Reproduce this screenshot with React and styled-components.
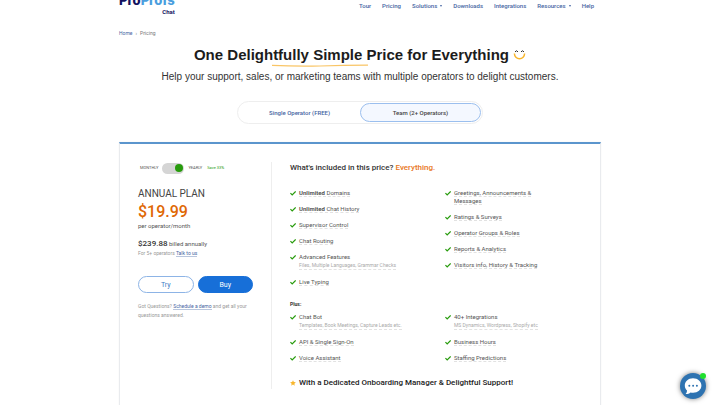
import React, { useState } from 'react';
import styled, { createGlobalStyle } from 'styled-components';

const GlobalStyle = createGlobalStyle`
  * {
    box-sizing: border-box;
  }

  body {
    margin: 0;
    background: #fff;
    color: #555;
    font-family: Roboto, sans-serif;
    font-size: 6px;
    line-height: 8px;
    overflow: hidden;
  }

  h1, h2, h3, p, ul {
    margin: 0;
    padding: 0;
  }

  button {
    font-family: inherit;
    cursor: pointer;
  }
`;

const Container = styled.div`
  max-width: 482px;
  margin: 0 auto;
`;

const Header = styled.header`
  display: flex;
  justify-content: space-between;
  align-items: flex-start;
  height: 24px;
  margin-top: -8px;
`;

const Logo = styled.a`
  display: block;
  color: #12125f;
  font-family: Inter, sans-serif;
  font-size: 13px;
  font-weight: 800;
  line-height: 16px;
  text-align: right;
  text-decoration: none;
`;

const LogoAccent = styled.span`
  color: #4a9ede;
`;

const LogoProduct = styled.span`
  display: block;
  font-family: Roboto, sans-serif;
  font-size: 6px;
  font-weight: 700;
  line-height: 7px;
`;

const Nav = styled.nav`
  display: flex;
  gap: 11px;
  padding: 10px 7px 0 0;
`;

const NavLink = styled.a`
  display: flex;
  align-items: center;
  gap: 3px;
  color: #4665a2;
  font-weight: 500;
  text-decoration: none;
`;

const Caret = styled.span`
  border: 1px solid transparent;
  border-top: 2px solid #4665a2;
  border-bottom: 0;
`;

const Breadcrumb = styled.nav`
  display: flex;
  gap: 3px;
  padding-top: 13px;
  font-size: 5px;
  color: #777;
`;

const Crumb = styled.a`
  color: #4665a2;
  text-decoration: none;
`;

const Hero = styled.section`
  display: flex;
  flex-direction: column;
  align-items: center;
  padding-top: 9px;
  font-family: 'Liberation Sans', sans-serif;
`;

const Title = styled.h1`
  display: flex;
  align-items: center;
  gap: 4px;
  color: #1c1c1c;
  font-size: 15px;
  line-height: 18px;
  white-space: nowrap;
`;

const Underline = styled.svg`
  display: block;
  width: 96px;
  height: 4px;
  margin-right: 80px;
`;

const Subtitle = styled.p`
  padding-top: 2px;
  color: #333;
  font-size: 10px;
  line-height: 14px;
  white-space: nowrap;
`;

const Tabs = styled.div`
  display: flex;
  width: 51%;
  margin: 17px auto 18px;
  padding: 1px;
  border: 1px solid #eee;
  border-radius: 12px;
`;

const Tab = styled.button`
  flex: 1;
  height: 19px;
  padding: 0;
  border: 1px solid ${({ $active }) => ($active ? '#9bbfee' : 'transparent')};
  border-radius: 10px;
  background: ${({ $active }) => ($active ? '#f4f8ff' : 'transparent')};
  color: ${({ $active }) => ($active ? '#444' : '#4665a2')};
  font-size: 6px;
  font-weight: 500;
`;

const Card = styled.main`
  display: flex;
  padding: 18px 0;
  border: 1px solid #e9ebee;
  border-top: 2px solid #5b95cd;
  box-shadow: 0 0 1px #eee;
`;

const Plan = styled.section`
  flex: 0 0 152px;
  padding: 0 18px;
  border-right: 1px solid #eee;
`;

const Billing = styled.div`
  display: flex;
  align-items: center;
  gap: 4px;
  height: 12px;
  padding-left: 2px;
  font-size: 4px;
`;

const Switch = styled.input`
  appearance: none;
  display: flex;
  align-items: center;
  width: 22px;
  height: 11px;
  margin: 0;
  padding: 0 1px;
  border-radius: 6px;
  background: #d5d5d5;
  cursor: pointer;

  &::before {
    content: '';
    width: 8px;
    height: 8px;
    border-radius: 50%;
    background: #777;
  }

  &:checked::before {
    margin-left: auto;
    background: #279b0c;
  }
`;

const Saving = styled.span`
  padding-left: 1px;
  color: #279b0c;
`;

const PlanName = styled.h2`
  padding-top: 14px;
  color: #444;
  font-size: 10px;
  font-weight: 400;
  line-height: 12px;
`;

const Price = styled.p`
  padding-top: 2px;
  color: #df6805;
  font-size: 16px;
  font-weight: 500;
  line-height: 20px;
`;

const Total = styled.p`
  padding-top: 9px;
  line-height: 10px;
`;

const Amount = styled.strong`
  color: #333;
  font-size: 8px;
  font-weight: 500;
`;

const Note = styled.p`
  color: #999;
  font-size: 5px;
  line-height: 9px;
`;

const NoteLink = styled.a`
  border-bottom: 1px solid #b9c6dd;
  color: #4665a2;
  text-decoration: none;
`;

const Actions = styled.div`
  display: flex;
  gap: 4px;
  padding: 18px 0 9px;
`;

const Action = styled.button`
  flex: 1;
  height: 17px;
  padding: 0;
  border: 1px solid ${({ $primary }) => ($primary ? '#176fd8' : '#8db4e6')};
  border-radius: 9px;
  background: ${({ $primary }) => ($primary ? '#176fd8' : '#fff')};
  color: ${({ $primary }) => ($primary ? '#fff' : '#3e7cc5')};
  font-size: 7px;
`;

const Included = styled.section`
  flex: 1;
  padding-left: 18px;
`;

const IncludedTitle = styled.h2`
  padding-bottom: 15px;
  color: #333;
  font-size: 8px;
  font-weight: 500;
  line-height: 12px;
`;

const Highlight = styled.span`
  color: #e8761b;
`;

const Columns = styled.div`
  display: grid;
  grid-template-columns: 1fr 1fr;
`;

const FeatureList = styled.ul`
  display: flex;
  flex-direction: column;
  gap: 8px;
  list-style: none;
`;

const Feature = styled.li`
  display: flex;
  gap: 3px;
`;

const FeatureText = styled.div`
  max-width: 100px;
  font-size: 6px;
  line-height: 8px;
`;

const Dashed = styled.span`
  border-bottom: 1px dashed #e2e2e2;
`;

const Detail = styled.span`
  display: inline-block;
  border-bottom: 1px dashed #e2e2e2;
  color: #aaa;
  font-size: 5px;
  line-height: 7px;
  white-space: nowrap;
`;

const PlusTitle = styled.h3`
  padding: 14px 0 5px;
  color: #333;
  font-size: 5px;
  font-weight: 700;
`;

const Support = styled.p`
  display: flex;
  align-items: center;
  gap: 3px;
  padding-top: 15px;
  color: #222;
  font-size: 8px;
  font-weight: 500;
  line-height: 12px;
`;

// stays over the page in the corner
const ChatButton = styled.button`
  position: fixed;
  right: 14px;
  bottom: 6px;
  width: 26px;
  height: 26px;
  padding: 0;
  border: 0;
  border-radius: 50%;
  background: #2e73b1;
  box-shadow: 0 0 5px rgba(0, 0, 0, 0.5);
`;

const Online = styled.span`
  position: absolute;
  top: 0;
  right: 0;
  width: 6px;
  height: 6px;
  border-radius: 50%;
  background: #20df2c;
`;

const Check = () => (
  <svg width="6" height="8" viewBox="0 0 6 8" aria-hidden="true">
    <path d="M0.4 4.1 L2.2 5.9 L5.7 2.4" fill="none" stroke="#279b0c" strokeWidth="1.3" />
  </svg>
);

const Smile = () => (
  <svg width="13" height="12" viewBox="0 0 13 12" aria-hidden="true">
    <path d="M1.4 4.6 A5.1 5.1 0 0 0 11.6 4.6" fill="none" stroke="#f8b62d" strokeWidth="1.5" />
    <path d="M2 2.9 Q3.5 0.6 5 2.9 M8 2.9 Q9.5 0.6 11 2.9" fill="none" stroke="#333" strokeWidth="1" />
  </svg>
);

const Star = () => (
  <svg width="6" height="6" viewBox="0 0 12 12" aria-hidden="true">
    <path d="M6 0.5 L7.7 4.2 L11.7 4.6 L8.7 7.3 L9.6 11.3 L6 9.2 L2.4 11.3 L3.3 7.3 L0.3 4.6 L4.3 4.2 Z" fill="#f8b62d" />
  </svg>
);

const links = [
  { label: 'Tour' },
  { label: 'Pricing' },
  { label: 'Solutions', menu: true },
  { label: 'Downloads' },
  { label: 'Integrations' },
  { label: 'Resources', menu: true },
  { label: 'Help' },
];

const mainFeatures = [
  [
    { strong: 'Unlimited', label: 'Domains' },
    { strong: 'Unlimited', label: 'Chat History' },
    { label: 'Supervisor Control' },
    { label: 'Chat Routing' },
    { label: 'Advanced Features', detail: 'Files, Multiple Languages, Grammar Checks' },
    { label: 'Live Typing' },
  ],
  [
    { label: 'Greetings, Announcements & Messages' },
    { label: 'Ratings & Surveys' },
    { label: 'Operator Groups & Roles' },
    { label: 'Reports & Analytics' },
    { label: 'Visitors info, History & Tracking' },
  ],
];

const plusFeatures = [
  [
    { label: 'Chat Bot', detail: 'Templates, Book Meetings, Capture Leads etc.' },
    { label: 'API & Single Sign-On' },
    { label: 'Voice Assistant' },
  ],
  [
    { label: '40+ Integrations', detail: 'MS Dynamics, Wordpress, Shopify etc' },
    { label: 'Business Hours' },
    { label: 'Staffing Predictions' },
  ],
];

const Features = ({ columns }) => (
  <Columns>
    {columns.map((items, i) => (
      <FeatureList key={i}>
        {items.map(({ strong, label, detail }) => (
          <Feature key={label}>
            <Check />
            <FeatureText>
              {detail ? (
                <>
                  <div>{label}</div>
                  <Detail>{detail}</Detail>
                </>
              ) : (
                <Dashed>{strong ? <strong>{strong} </strong> : ''}{label}</Dashed>
              )}
            </FeatureText>
          </Feature>
        ))}
      </FeatureList>
    ))}
  </Columns>
);

const App = () => {
  const [tab, setTab] = useState('team');
  const [yearly, setYearly] = useState(true);

  return (
    <>
      <GlobalStyle />
      <Container>
        <Header>
          <Logo href="#">
            Pro<LogoAccent>Profs</LogoAccent>
            <LogoProduct>Chat</LogoProduct>
          </Logo>
          <Nav>
            {links.map(({ label, menu }) => (
              <NavLink href="#" key={label}>{label}{menu ? <Caret /> : ''}</NavLink>
            ))}
          </Nav>
        </Header>
        <Breadcrumb aria-label="Breadcrumb">
          <Crumb href="#">Home</Crumb>
          <span>›</span>
          <span>Pricing</span>
        </Breadcrumb>
        <Hero>
          <Title>One Delightfully Simple Price for Everything <Smile /></Title>
          <Underline viewBox="0 0 96 4" aria-hidden="true">
            <path d="M0 1.4 Q25 2.6 48 2 T96 1.2" fill="none" stroke="#f9c566" strokeWidth="1.2" />
          </Underline>
          <Subtitle>Help your support, sales, or marketing teams with multiple operators to delight customers.</Subtitle>
        </Hero>
        <Tabs role="tablist">
          <Tab role="tab" aria-selected={tab === 'single'} $active={tab === 'single'} onClick={() => setTab('single')}>
            Single Operator (FREE)
          </Tab>
          <Tab role="tab" aria-selected={tab === 'team'} $active={tab === 'team'} onClick={() => setTab('team')}>
            Team (2+ Operators)
          </Tab>
        </Tabs>
        <Card>
          <Plan>
            <Billing>
              <label htmlFor="billing">MONTHLY</label>
              <Switch id="billing" type="checkbox" role="switch" checked={yearly} onChange={(e) => setYearly(e.target.checked)} />
              <label htmlFor="billing">YEARLY</label>
              <Saving>Save 33%</Saving>
            </Billing>
            <PlanName>ANNUAL PLAN</PlanName>
            <Price>$19.99</Price>
            <p>per operator/month</p>
            <Total><Amount>$239.88</Amount> billed annually</Total>
            <Note>For 5+ operators <NoteLink href="#">Talk to us</NoteLink></Note>
            <Actions>
              <Action>Try</Action>
              <Action $primary>Buy</Action>
            </Actions>
            <Note>Got Questions? <NoteLink href="#">Schedule a demo</NoteLink> and get all your questions answered.</Note>
          </Plan>
          <Included>
            <IncludedTitle>What's included in this price? <Highlight>Everything.</Highlight></IncludedTitle>
            <Features columns={mainFeatures} />
            <PlusTitle>Plus:</PlusTitle>
            <Features columns={plusFeatures} />
            <Support><Star />With a Dedicated Onboarding Manager & Delightful Support!</Support>
          </Included>
        </Card>
      </Container>
      <ChatButton aria-label="Open chat">
        <svg width="26" height="26" viewBox="0 0 26 26" aria-hidden="true">
          <path d="M13 5.3 C8.1 5.3 4.8 8.6 4.8 12.6 C4.8 14.6 5.6 16.3 7 17.6 C7 19 6.5 20.2 5.6 21.1 C7.6 21.2 9.3 20.5 10.5 19.5 C16.4 20.9 21.4 17.5 21.4 12.6 C21.4 8.6 17.9 5.3 13 5.3 Z" fill="#fff" />
          <circle cx="9.3" cy="12.8" r="1" fill="#2e73b1" />
          <circle cx="13.1" cy="12.8" r="1" fill="#2e73b1" />
          <circle cx="16.9" cy="12.8" r="1" fill="#2e73b1" />
        </svg>
        <Online />
      </ChatButton>
    </>
  );
};

export default App;
